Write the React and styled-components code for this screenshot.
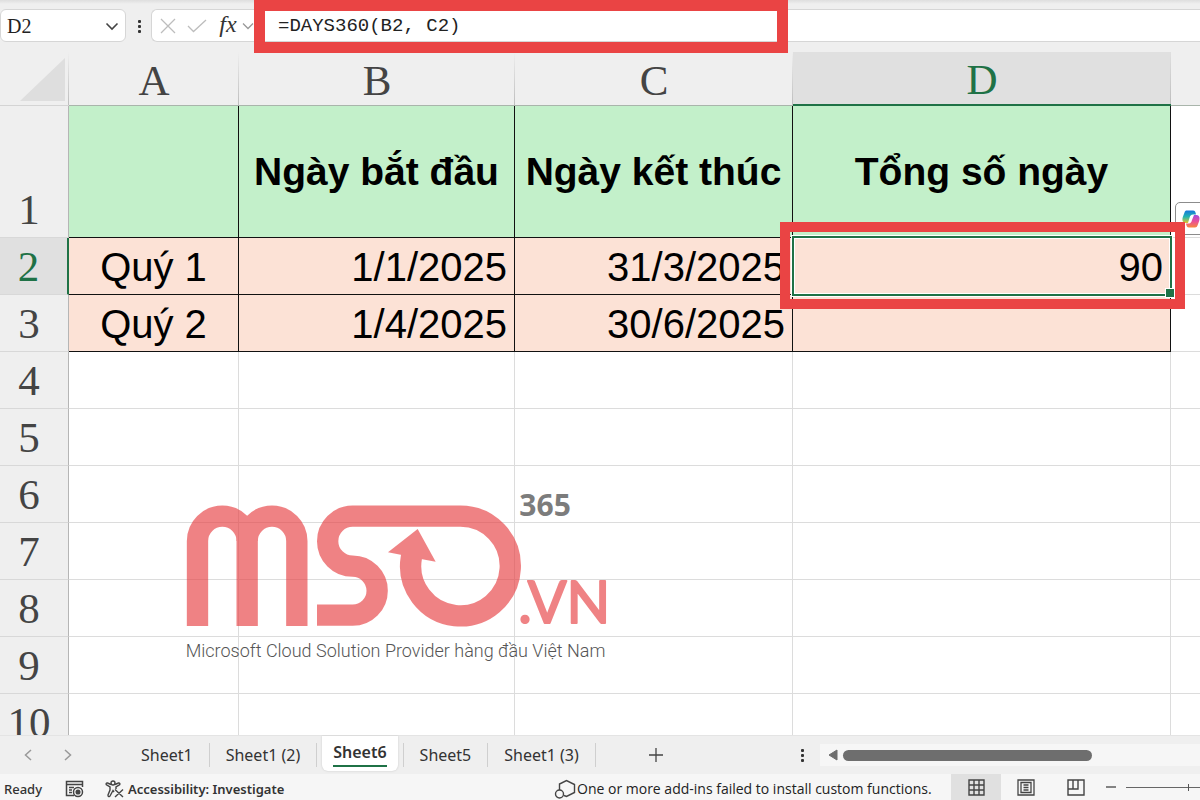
import React from "react";
import styled, { createGlobalStyle, css } from "styled-components";

const GREEN = "#1f7246";
const RED = "#ea4444";
const UI = '"Noto Sans", "Open Sans", sans-serif';

const Global = createGlobalStyle`
  * { box-sizing: border-box; }
  body { margin: 0; background: #efefef; font-family: ${UI}; color: #333; }
  button { font: inherit; color: inherit; border: 0; padding: 0; background: none; }
  input { font: inherit; color: inherit; border: 0; padding: 0; background: none; outline: none; }
`;

const Window = styled.div`
  display: flex;
  flex-direction: column;
  height: 100vh;
  overflow: hidden;
`;

/* Formula bar */

const FormulaBar = styled.header`
  flex: none;
  display: flex;
  align-items: center;
  height: 52px;
  padding-bottom: 1px;
  background: linear-gradient(#dedede, #efefef 4px);
`;

const NameBox = styled.div`
  display: flex;
  align-items: center;
  width: 126px;
  height: 33px;
  padding: 0 6px;
  background: #fff;
  border: 1px solid #d6d6d6;
  border-radius: 6px;
`;

const NameInput = styled.input`
  flex: 1;
  min-width: 0;
  font-family: "Liberation Serif", serif;
  font-size: 20px;
  line-height: 24px;
  color: #222;
`;

const IconButton = styled.button`
  display: flex;
  align-items: center;
  justify-content: center;
  width: ${(p) => p.$w || 20}px;
  height: 24px;
`;

const FormulaField = styled.div`
  position: relative;
  flex: 1;
  display: flex;
  align-items: center;
  height: 33px;
  padding-left: 4px;
  background: #fff;
  border: 1px solid #d6d6d6;
  border-right: 0;
  border-radius: 6px 0 0 6px;
`;

const Fx = styled.span`
  padding-bottom: 4px;
  font: italic 24px/24px "Liberation Serif", serif;
  color: #333;
`;

const FormulaInput = styled.input`
  flex: 1;
  min-width: 0;
  padding-left: 24px;
  font-family: "Liberation Mono", "DejaVu Sans Mono", monospace;
  font-size: 19px;
  line-height: 24px;
  color: #222;
`;

const Highlight = styled.div`
  position: absolute;
  z-index: 3;
  pointer-events: none;
  border: ${(p) => p.$thick}px solid ${RED};
`;

const FormulaHighlight = styled(Highlight)`
  left: 102px;
  top: -10px;
  width: 534px;
  height: 53px;
`;

/* Grid */

const SheetArea = styled.main`
  position: relative;
  flex: 1;
  min-height: 0;
  overflow: hidden;
  background: #fff;
`;

const Grid = styled.table`
  width: 100%;
  table-layout: fixed;
  border-collapse: separate;
  border-spacing: 0;
`;

const headFont = css`
  padding: 0;
  font-family: "Liberation Serif", serif;
  font-size: 43px;
  line-height: 48px;
  font-weight: 400;
  color: ${(p) => (p.$active ? GREEN : "#444")};
  background-color: ${(p) => (p.$active ? "#e0e0e0" : "#efefef")};
`;

const ColumnHead = styled.th`
  ${headFont}
  height: 54px;
  padding-top: 4px;
  border-bottom: ${(p) => (p.$active ? `2px solid ${GREEN}` : "1px solid #a9b5ab")};
  background-image: linear-gradient(transparent, #bdbdbd);
  background-size: 1px 100%;
  background-position: right;
  background-repeat: no-repeat;
  &:last-child { background-image: none; }
`;

const Corner = styled(ColumnHead)`
  padding: 0;
  border-bottom-color: #d4d4d4;
  svg { display: block; }
`;

const RowHead = styled.th`
  ${headFont}
  height: ${(p) => (p.$tall ? 132 : 57)}px;
  padding: 0 10px 0 0;
  vertical-align: bottom;
  text-align: center;
  border-right: ${(p) => (p.$active ? `2px solid ${GREEN}` : "1px solid #b5b5b5")};
  border-bottom: 1px solid #d8d8d8;
  div { height: 51px; }
`;

const Cell = styled.td`
  position: relative;
  padding: 1px 7px 0;
  font-family: "Liberation Sans", Arial, sans-serif;
  font-size: ${(p) => (p.$kind === "title" ? 39 : 40)}px;
  line-height: 48px;
  white-space: nowrap;
  color: #000;
  text-align: ${(p) => p.$align || "left"};
  font-weight: ${(p) => (p.$kind === "title" ? 700 : 400)};
  background: ${(p) => ({ title: "#c3f0ca", data: "#fce2d6" })[p.$kind] || "#fff"};
  border-right: 1px solid ${(p) => (p.$kind ? "#111" : "#dcdcdc")};
  border-bottom: 1px solid ${(p) => (p.$kind ? "#111" : "#dcdcdc")};
  &:last-child { border-right: 0; }
`;

const Selection = styled.div`
  position: absolute;
  z-index: 2;
  inset: -2px -2px -2px -1px;
  border: 2px solid ${GREEN};
  outline: 1px solid #fff;
  box-shadow: inset 0 0 0 1px #fff;

  &::after {
    content: "";
    position: absolute;
    right: -5px;
    bottom: -4px;
    width: 8px;
    height: 8px;
    background: ${GREEN};
    border: 1px solid #fff;
  }
`;

const CellHighlight = styled(Highlight)`
  inset: -16px -15px -15px -13px;
`;

const CopilotButton = styled.button`
  position: absolute;
  z-index: 2;
  left: 382px;
  bottom: 2px;
  display: flex;
  align-items: center;
  width: 40px;
  height: 33px;
  padding-left: 6px;
  background: #fff;
  border: 1px solid #8c8c8c;
  border-radius: 5px;
`;

const Watermark = styled.svg`
  position: absolute;
  left: 170px;
  top: 428px;
  width: 460px;
  height: 190px;
  pointer-events: none;
`;

/* Sheet tabs */

const TabBar = styled.nav`
  flex: none;
  display: flex;
  align-items: center;
  height: 39px;
  background: #efefef;
  border-top: 1px solid #e4e4e4;
`;

const TabArrows = styled.div`
  display: flex;
  gap: 20px;
  padding: 0 47px 0 18px;
`;

const Tab = styled.button`
  height: 24px;
  padding: 0 16px;
  font-size: 16px;
  line-height: 24px;
  white-space: nowrap;
  border-right: 1px solid #cfcfcf;

  ${(p) =>
    p.$active &&
    css`
      align-self: flex-start;
      height: 35px;
      margin: 0 5px;
      padding: 0 11px;
      font-weight: 600;
      background: #fff;
      border: 0;
      border-radius: 0 0 6px 6px;
      box-shadow: 0 0 2px #c4c4c4;
      span {
        display: block;
        height: 30px;
        padding-top: 3px;
        margin-bottom: 4px;
        border-bottom: 2px solid ${GREEN};
      }
    `}
`;

const TabDivider = styled.i`
  width: 1px;
  height: 24px;
  background: #cfcfcf;
`;

const AddSheet = styled(IconButton)`
  margin-left: 50px;
`;

const ScrollZone = styled.div`
  display: flex;
  align-items: center;
  width: 404px;
  margin-left: auto;
`;

const Track = styled.div`
  flex: 1;
  display: flex;
  align-items: center;
  gap: 5px;
  height: 22px;
  margin-left: 12px;
  padding-left: 8px;
  background: #f6f6f6;
`;

const Thumb = styled.div`
  width: 249px;
  height: 11px;
  background: #6e6e6e;
  border-radius: 6px;
`;

/* Status bar */

const StatusBar = styled.footer`
  flex: none;
  display: grid;
  grid-template-columns: 554px 1fr auto;
  align-items: center;
  height: 26px;
  font-size: 13px;
  line-height: 20px;
  font-weight: 500;
  white-space: nowrap;
  background: #f6f6f6;
`;

const StatusGroup = styled.div`
  display: flex;
  align-items: center;
  height: 26px;
  padding-top: ${(p) => p.$drop || 0}px;
  padding-left: ${(p) => p.$pad || 0}px;
`;

const Message = styled.span`
  font-family: "Open Sans", "Noto Sans", sans-serif;
  font-size: 14px;
  font-weight: 400;
  color: #222;
`;

const MacroButton = styled(IconButton)`
  margin: 0 21px 0 22px;
`;

const AccessButton = styled.button`
  display: flex;
  align-items: center;
  gap: 4px;
  font-weight: 600;
`;

const ViewButton = styled.button`
  display: flex;
  align-items: center;
  justify-content: center;
  width: 50px;
  height: 100%;
  background: ${(p) => (p.$active ? "#e0e0e0" : "transparent")};
`;

const ZoomTrack = styled.div`
  width: 76px;
  overflow: hidden;
  margin-left: 3px;
`;

const ZoomRange = styled.input`
  display: block;
  appearance: none;
  width: 125px;
  height: 20px;
  background:
    linear-gradient(#555, #555) center / 1px 7px no-repeat,
    linear-gradient(#666, #666) center / 100% 1px no-repeat;
  &::-webkit-slider-thumb {
    appearance: none;
    width: 4px;
    height: 12px;
    background: #555;
  }
`;

/* Icons */

const Line = ({ w, h, d, color = "#444", sw = 1.3, fill = "none", children }) => (
  <svg width={w} height={h} viewBox={`0 0 ${w} ${h}`} fill={fill} stroke={color} strokeWidth={sw} aria-hidden="true">
    {d && <path d={d} />}
    {children}
  </svg>
);

const Dots = () => (
  <svg width="12" height="16" viewBox="0 0 12 16" fill="#333" aria-hidden="true">
    <rect x="5" y="2" width="3" height="3" rx="1" />
    <rect x="5" y="7" width="3" height="3" rx="1" />
    <rect x="5" y="12" width="3" height="3" rx="1" />
  </svg>
);

const CopilotIcon = () => (
  <svg width="18" height="18" viewBox="0 0 18 18" aria-hidden="true">
    <defs>
      <linearGradient id="cpA" x1="0" y1="0" x2="0" y2="1">
        <stop offset="0" stopColor="#1676dc" />
        <stop offset="0.5" stopColor="#22b5b0" />
        <stop offset="1" stopColor="#e8c62c" />
      </linearGradient>
      <linearGradient id="cpB" x1="0" y1="0" x2="0" y2="1">
        <stop offset="0" stopColor="#a14be0" />
        <stop offset="0.5" stopColor="#e94f9a" />
        <stop offset="1" stopColor="#f8863c" />
      </linearGradient>
    </defs>
    <path d="M5 .5h6c2 0 2.500 1.500 3 4h-3C9 4.500 8 6 7.500 8L6 13H3.500C0 13 0 9 1 6.500l1.500-4C3 1 3.500.5 5 .5z" fill="url(#cpA)" />
    <path d="M13 17.500H7c-2 0-2.500-1.500-3-4h3c1.500 0 2.500-1.500 3-3.500L12 5h2.500c3.500 0 3.500 4 2.500 6.500l-1.500 4c-.5 1-1 2-2.500 2z" fill="url(#cpB)" />
  </svg>
);

const Logo = () => (
  <Watermark viewBox="0 0 1380 570" role="img" aria-label="MSO 365 .VN">
    <g opacity="0.66">
      <g fill="none" stroke="#e84346" strokeWidth="64">
        <path d="M82.500 438V183A74.500 74.500 0 0 1 231.500 183V438" />
        <path d="M231.500 183A74.500 74.500 0 0 1 380.500 183V438" />
        <path d="M441 405.500H548A73.500 73.500 0 0 0 548 258.500A75 75 0 0 1 548 108.500H871A149.500 149.500 0 1 1 724 233L728 212" />
      </g>
      <path d="M743 147L797 245L757 238L692 224L654 217Z" fill="#e84346" />
      <text
        x="1045"
        y="429"
        fontFamily="Lato, sans-serif"
        fontSize="172"
        fill="#e84346"
        stroke="#e84346"
        strokeWidth="6"
        strokeLinejoin="round"
      >
        .VN
      </text>
    </g>
    <text x="1048" y="108" fontFamily="Noto Sans, sans-serif" fontSize="90" fontWeight="700" fill="#7c7c7c">365</text>
    <text x="47" y="531" fontFamily="Roboto, sans-serif" fontSize="54" fontWeight="300" fill="#555">
      Microsoft Cloud Solution Provider hàng đầu Việt Nam
    </text>
  </Watermark>
);

const rows = [
  { n: 1, kind: "title", align: "center", cells: ["", "Ngày bắt đầu", "Ngày kết thúc", "Tổng số ngày"] },
  { n: 2, kind: "data", cells: ["Quý 1", "1/1/2025", "31/3/2025", "90"] },
  { n: 3, kind: "data", cells: ["Quý 2", "1/4/2025", "30/6/2025", ""] },
  ...[4, 5, 6, 7, 8, 9, 10].map((n) => ({ n, cells: ["", "", "", ""] })),
];

const tabs = ["Sheet1", "Sheet1 (2)", "Sheet6", "Sheet5", "Sheet1 (3)"];

export default function App() {
  return (
    <Window>
      <Global />
      <FormulaBar>
        <NameBox>
          <NameInput aria-label="Name box" defaultValue="D2" />
          <IconButton $w={14} aria-label="Open name list">
            <Line w={14} h={10} d="M1.500 2.500L7 8L12.500 2.500" sw={1.6} />
          </IconButton>
        </NameBox>
        <IconButton $w={25} aria-label="Resize name box"><Dots /></IconButton>
        <FormulaField>
          <IconButton $w={24} aria-label="Cancel">
            <Line w={16} h={16} d="M1 1L15 15M15 1L1 15" color="#bdbdbd" />
          </IconButton>
          <IconButton $w={34} aria-label="Enter">
            <Line w={20} h={14} d="M1 7L6.500 12.500L19 1" color="#bdbdbd" />
          </IconButton>
          <IconButton $w={28} aria-label="Insert function"><Fx>fx</Fx></IconButton>
          <IconButton $w={12} aria-label="Function list">
            <Line w={12} h={8} d="M1 1.500L6 6.500L11 1.500" color="#999" />
          </IconButton>
          <FormulaInput aria-label="Formula" defaultValue="=DAYS360(B2, C2)" />
          <FormulaHighlight $thick={11} />
        </FormulaField>
      </FormulaBar>

      <SheetArea>
        <Grid>
          <colgroup>
            <col style={{ width: 69 }} />
            <col style={{ width: 170 }} />
            <col style={{ width: 276 }} />
            <col style={{ width: 278 }} />
            <col style={{ width: 378 }} />
            <col />
          </colgroup>
          <thead>
            <tr>
              <Corner>
                <svg width="68" height="52" viewBox="0 0 68 52" role="img" aria-label="Select all">
                  <path d="M20 48L65 5V48Z" fill="#dedede" />
                </svg>
              </Corner>
              {["A", "B", "C", "D", ""].map((c, i) => (
                <ColumnHead key={i} scope="col" $active={c === "D"}>{c}</ColumnHead>
              ))}
            </tr>
          </thead>
          <tbody>
            {rows.map((row) => (
              <tr key={row.n}>
                <RowHead scope="row" $tall={row.n === 1} $active={row.n === 2}>
                  <div>{row.n}</div>
                </RowHead>
                {row.cells.map((text, i) => (
                  <Cell key={i} $kind={row.kind} $align={row.align || (i === 0 ? "center" : "right")}>
                    {text}
                    {row.n === 1 && i === 3 && (
                      <CopilotButton aria-label="Copilot"><CopilotIcon /></CopilotButton>
                    )}
                    {row.n === 2 && i === 3 && (
                      <>
                        <Selection />
                        <CellHighlight $thick={10} />
                      </>
                    )}
                  </Cell>
                ))}
                <Cell />
              </tr>
            ))}
          </tbody>
        </Grid>
        <Logo />
      </SheetArea>

      <TabBar aria-label="Sheets">
        <TabArrows>
          <IconButton aria-label="Previous sheet">
            <Line w={10} h={14} d="M8 2L2.500 7L8 12" color="#999" sw={1.500} />
          </IconButton>
          <IconButton aria-label="Next sheet">
            <Line w={10} h={14} d="M2 2L7.500 7L2 12" color="#999" sw={1.500} />
          </IconButton>
        </TabArrows>
        {tabs.map((name) => (
          <React.Fragment key={name}>
            <Tab $active={name === "Sheet6"}><span>{name}</span></Tab>
            {name === "Sheet6" && <TabDivider />}
          </React.Fragment>
        ))}
        <AddSheet aria-label="New sheet">
          <Line w={16} h={16} d="M8 1V15M1 8H15" />
        </AddSheet>
        <ScrollZone>
          <IconButton $w={12} aria-label="Resize tabs"><Dots /></IconButton>
          <Track>
            <svg width="10" height="12" viewBox="0 0 10 12" fill="#6e6e6e" aria-hidden="true">
              <path d="M9 1V11L1 6Z" stroke="#6e6e6e" strokeLinejoin="round" />
            </svg>
            <Thumb />
          </Track>
        </ScrollZone>
      </TabBar>

      <StatusBar>
        <StatusGroup $pad={4} $drop={3}>
          <span>Ready</span>
          <MacroButton aria-label="Record macro">
            <Line w={19} h={18} sw={1.5}>
              <path d="M9 15.500H1.500V1.500H17.500V7M1.500 4.500H17.500M4 7.500H9M4 10H7M4 12.500H7" />
              <circle cx="13" cy="12" r="4.500" />
              <circle cx="13" cy="12" r="1.800" fill="#444" />
            </Line>
          </MacroButton>
          <AccessButton>
            <Line w={19} h={18} sw={1.4}>
              <circle cx="8" cy="3" r="2" />
              <path d="M6 4.500L2.500 3C1 2.500.500 4.500 2 5.200L5 6.800V10L3 15C2.600 16.700 4.500 17 5 16L8 10.500L9 12M10 4.500L13.500 3C15 2.500 15.500 4.500 14 5.200L11 6.800V9M10 9.500L18 17M18 9.500L10 17" />
            </Line>
            Accessibility: Investigate
          </AccessButton>
        </StatusGroup>
        <StatusGroup $drop={3}>
          <Line w={23} h={20} sw={1.4}>
            <path d="M5.500 11V5L12.500 1.500L20.500 5.500V13.500L12.500 17.500L10 16.500" />
            <circle cx="5.500" cy="15" r="4" />
          </Line>
          <Message>One or more add-ins failed to install custom functions.</Message>
        </StatusGroup>
        <StatusGroup>
          <ViewButton $active aria-label="Normal view">
            <Line w={17} h={17} d="M1 1H16V16H1ZM6 1V16M11 1V16M1 6H16M1 11H16" sw={1.4} />
          </ViewButton>
          <ViewButton aria-label="Page layout view">
            <Line w={18} h={17} d="M1 1H17V16H1ZM4 3.500H14V13.500H4ZM6.500 6H11.500M6.500 8.500H11.500M6.500 11H11.500" />
          </ViewButton>
          <ViewButton aria-label="Page break view">
            <Line w={18} h={17} d="M1 1H17V16H1ZM1 10H11V1M6 1V10" sw={1.4} />
          </ViewButton>
          <IconButton aria-label="Zoom out">
            <Line w={10} h={10} d="M0 5H10" />
          </IconButton>
          <ZoomTrack>
            <ZoomRange type="range" aria-label="Zoom" min="0" max="100" defaultValue="100" />
          </ZoomTrack>
        </StatusGroup>
      </StatusBar>
    </Window>
  );
}
